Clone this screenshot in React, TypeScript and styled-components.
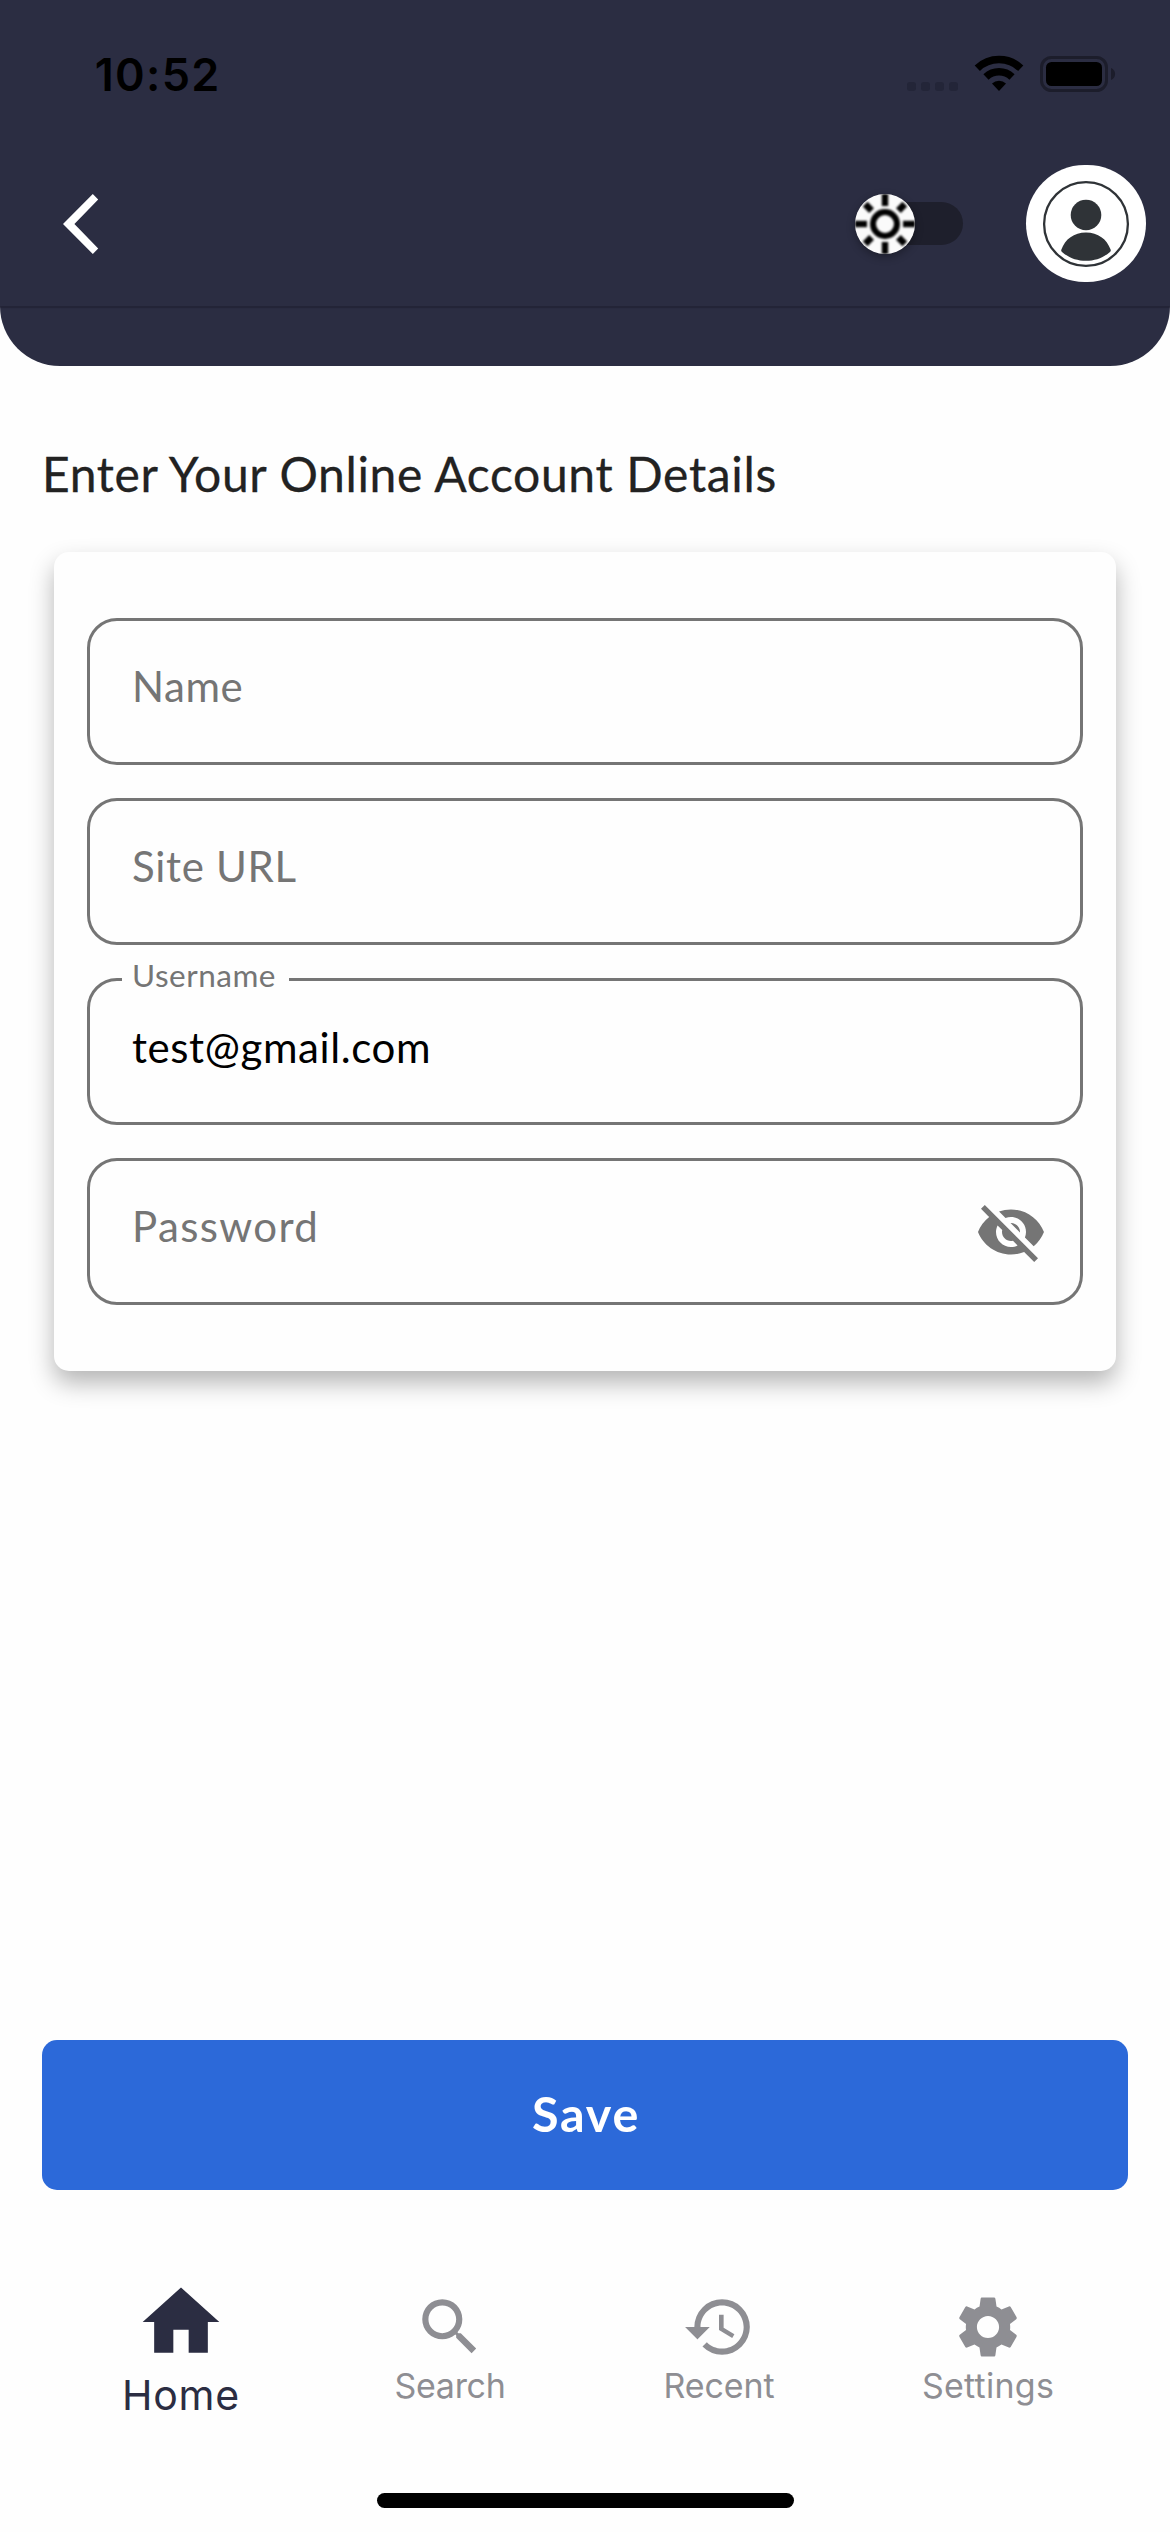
import React from 'react';
import styled, { createGlobalStyle } from 'styled-components';
import { MdHome, MdSearch, MdHistory, MdSettings, MdVisibilityOff } from 'react-icons/md';

const navy = '#2b2d42';
const paper = '#fefefe';
const outline = '#757575';
const muted = '#8e8e93';

const GlobalStyle = createGlobalStyle`
  *, *::before, *::after { box-sizing: border-box; }
  body { margin: 0; background: ${paper}; }
  svg { display: block; flex: none; }
`;

const Screen = styled.div`
  width: 1170px;
  height: 2532px;
  display: flex;
  flex-direction: column;
  background: ${paper};
  font-family: Lato, 'Noto Sans', sans-serif;
  overflow: hidden;
`;

const Header = styled.header`
  height: 366px;
  flex: none;
  background: ${navy};
  border-radius: 0 0 60px 60px;
`;

const AppBar = styled.div`
  height: 306px;
  background: ${navy};
  box-shadow: 0 2px 1px rgba(20, 20, 35, 0.35);
`;

const StatusBar = styled.div`
  height: 141px;
  padding: 50px 54px 0 94.7px;
  display: flex;
  justify-content: space-between;
  align-items: flex-start;
`;

const Clock = styled.span`
  margin-top: -3px;
  font: 600 45px/56px Inter, sans-serif;
  letter-spacing: 1.3px;
  color: #000;
`;

const Toolbar = styled.div`
  height: 165px;
  padding: 0 24px 0 63px;
  display: flex;
  align-items: center;
`;

const IconButton = styled.button`
  padding: 0;
  border: 0;
  background: none;
  margin-right: auto;
`;

const Track = styled.div`
  width: 102px;
  height: 43px;
  margin-right: 63px;
  display: flex;
  align-items: center;
  border-radius: 22px;
  background: #1e1f2c;
`;

const Thumb = styled.div`
  width: 60px;
  height: 60px;
  flex: none;
  margin-left: -6px;
  border-radius: 50%;
  overflow: hidden;
  background: #fafafa;
  box-shadow: 0 3px 8px rgba(0, 0, 0, 0.32);
`;

const Avatar = styled.div`
  width: 120px;
  height: 117px;
  display: flex;
  align-items: center;
  justify-content: center;
  border-radius: 60px;
  background: #fff;
`;

const Title = styled.h1`
  margin: 78px 42px 0;
  font-size: 48px;
  line-height: 60px;
  font-weight: 400;
  letter-spacing: 0.65px;
  color: #222;
  -webkit-text-stroke: 0.3px #222;
`;

const Card = styled.section`
  margin: 48px 54px 0;
  padding: 66px 33px;
  display: flex;
  flex-direction: column;
  gap: 33px;
  border-radius: 15px;
  background: ${paper};
  box-shadow: 0 12px 24px rgba(0, 0, 0, 0.29);
`;

const Field = styled.div<{ $filled?: boolean }>`
  position: relative;
  height: 147px;
  padding: 0 33px 0 42px;
  display: flex;
  align-items: center;
  justify-content: space-between;
  border: 3px solid ${outline};
  border-radius: 30px;
  color: ${p => (p.$filled ? '#000' : outline)};
`;

const FieldText = styled.span<{ $spacing: number; $lift: number }>`
  padding-bottom: ${p => p.$lift}px;
  font-size: 42px;
  line-height: 50px;
  letter-spacing: ${p => p.$spacing}px;
`;

const FloatingLabel = styled.label`
  position: absolute;
  left: 32px;
  top: -24px;
  width: 167px;
  padding-left: 10px;
  font-size: 31.5px;
  line-height: 36px;
  letter-spacing: 0.5px;
  color: ${outline};
  background: ${paper};
`;

const SaveButton = styled.button`
  height: 150px;
  margin: auto 42px 0;
  padding: 0 0 4px 2px;
  border: 0;
  border-radius: 15px;
  background: #2c69d9;
  color: #fff;
  font: 700 48.5px/60px Lato, sans-serif;
  letter-spacing: 1.8px;
`;

const TabBar = styled.nav`
  height: 303px;
  padding: 0 46.5px;
  display: grid;
  grid-template-columns: repeat(4, 269px);
  align-items: start;
  flex: none;
`;

const Tab = styled.div<{ $active?: boolean; $spacing: number }>`
  padding-top: ${p => (p.$active ? 86 : 100)}px;
  display: flex;
  flex-direction: column;
  align-items: center;
  gap: 2px;
  color: ${p => (p.$active ? navy : muted)};
  font-family: Inter, sans-serif;
  font-size: ${p => (p.$active ? 41 : 34)}px;
  line-height: ${p => (p.$active ? 50 : 40)}px;
  letter-spacing: ${p => p.$spacing}px;
`;

const HomeIndicator = styled.div`
  width: 417px;
  height: 15px;
  margin: 0 auto 24px;
  flex: none;
  border-radius: 8px;
  background: #000;
`;

const StatusIcons = () => (
  <svg width="209" height="46" viewBox="907 50 209 46">
    <g fill="#232538">
      {[907, 921, 935, 949].map(x => (
        <rect key={x} x={x} y="82" width="9" height="9" rx="3" />
      ))}
    </g>
    <g fill="none" stroke="#000">
      <path d="M977.3 68.2a31.5 31.5 0 0 1 43.4 0" strokeWidth="7.6" />
      <path d="M986 76.9a19 19 0 0 1 26 0" strokeWidth="7.6" />
    </g>
    <path d="M999 91l-7-7.4a10.3 10.3 0 0 1 14 0z" />
    <rect x="1041.5" y="57.5" width="65" height="33" rx="10" fill="none" stroke="#1c1d2b" strokeWidth="3" />
    <rect x="1046" y="62" width="56" height="24" rx="5.5" />
    <path d="M1111 68c5.4 1.8 5.4 10.2 0 12z" fill="#1c1d2b" />
  </svg>
);

const BackChevron = () => (
  <svg width="36" height="62" viewBox="0 0 36 62">
    <path d="M0 31L29.8 1l5.4 5.4L11.4 31l23.8 24.6-5.4 5.4z" fill="#fff" />
  </svg>
);

const Sun = () => (
  <svg width="60" height="60" viewBox="-30 -30 60 60">
    <filter id="soft" x="-20%" y="-20%" width="140%" height="140%">
      <feGaussianBlur stdDeviation="1" />
    </filter>
    <g fill="none" stroke="#000" filter="url(#soft)">
      <circle r="12" strokeWidth="6" />
      {[0, 90, 180, 270].map(a => (
        <path key={a} d="M0-30v12" strokeWidth="6.4" transform={`rotate(${a})`} />
      ))}
      {[45, 135, 225, 315].map(a => (
        <path key={a} d="M0-28v9" strokeWidth="6.8" transform={`rotate(${a})`} />
      ))}
    </g>
  </svg>
);

const Person = () => (
  <svg width="88" height="88" viewBox="-44 -44 88 88" fill="#2f3337">
    <circle r="41.9" fill="none" stroke="#2f3337" strokeWidth="2.3" />
    <circle cy="-9" r="15.3" />
    <path d="M-24.6 25.6C-21 15-12 8.4 0 8.4S21 15 24.6 25.6c.4 1 .2 1.8-.6 2.4C17 34 9 36.8 0 36.8S-17 34-24 28c-.8-.6-1-1.4-.6-2.4z" />
  </svg>
);

export default function App() {
  return (
    <Screen>
      <GlobalStyle />
      <Header>
        <AppBar>
          <StatusBar>
            <Clock>10:52</Clock>
            <StatusIcons />
          </StatusBar>
          <Toolbar>
            <IconButton aria-label="Back">
              <BackChevron />
            </IconButton>
            <Track>
              <Thumb>
                <Sun />
              </Thumb>
            </Track>
            <Avatar>
              <Person />
            </Avatar>
          </Toolbar>
        </AppBar>
      </Header>
      <Title>Enter Your Online Account Details</Title>
      <Card>
        <Field>
          <FieldText $spacing={0.57} $lift={11}>Name</FieldText>
        </Field>
        <Field>
          <FieldText $spacing={0.67} $lift={11}>Site URL</FieldText>
        </Field>
        <Field $filled>
          <FloatingLabel>Username</FloatingLabel>
          <FieldText $spacing={0.6} $lift={9}>test@gmail.com</FieldText>
        </Field>
        <Field>
          <FieldText $spacing={1.36} $lift={11}>Password</FieldText>
          <MdVisibilityOff size={72} />
        </Field>
      </Card>
      <SaveButton>Save</SaveButton>
      <TabBar>
        <Tab $active $spacing={0.84}>
          <MdHome size={92} />
          Home
        </Tab>
        <Tab $spacing={-0.28}>
          <MdSearch size={74} />
          Search
        </Tab>
        <Tab $spacing={-0.11}>
          <MdHistory size={74} />
          Recent
        </Tab>
        <Tab $spacing={0.25}>
          <MdSettings size={74} />
          Settings
        </Tab>
      </TabBar>
      <HomeIndicator />
    </Screen>
  );
}
